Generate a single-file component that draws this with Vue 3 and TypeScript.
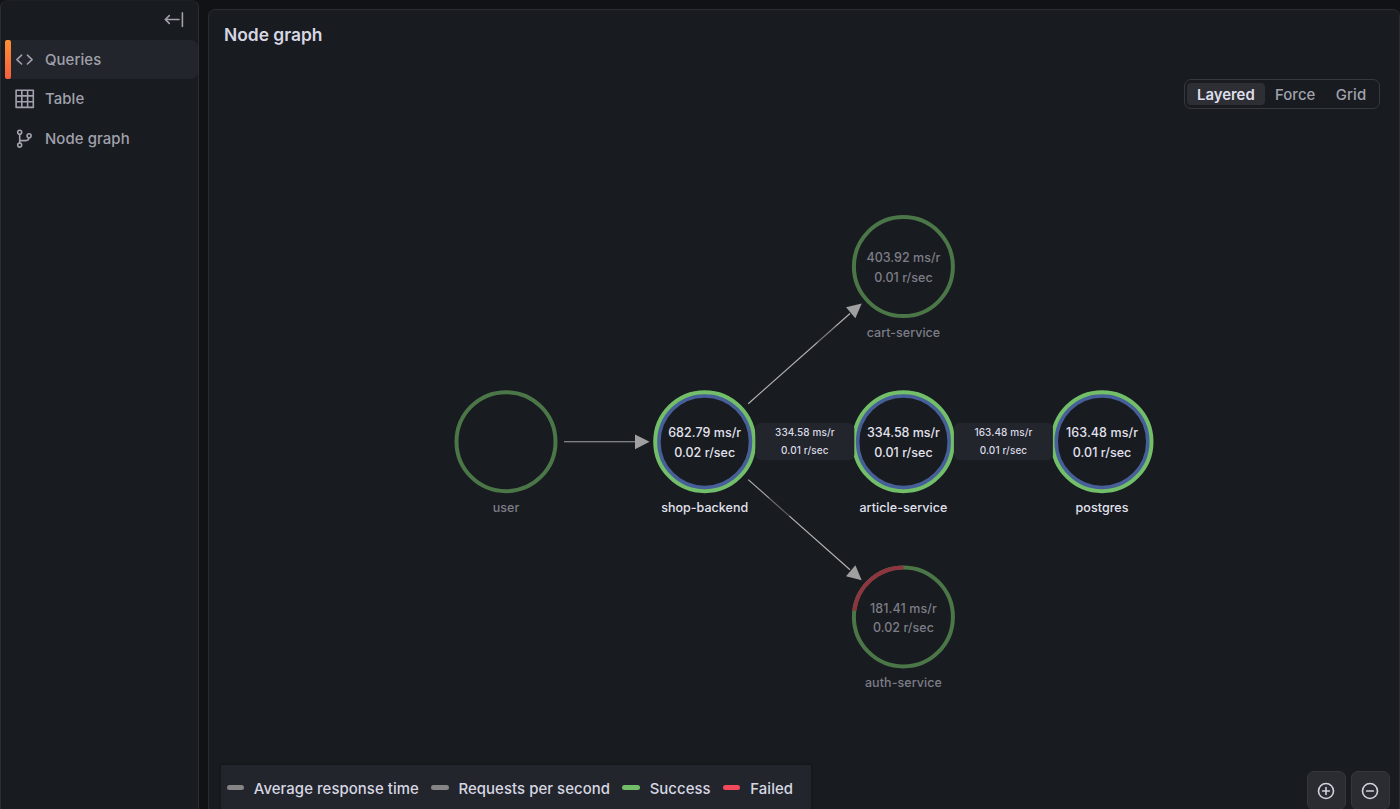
<script setup lang="ts">
interface GraphNode {
  id: string
  x: number
  y: number
  main: string
  mainWidth: number
  secondary: string
  secondaryWidth: number
  labelWidth: number
  active: boolean
  failed: number
}

const nodes: GraphNode[] = [
  { id: 'user', x: 506, y: 441.7, main: '', mainWidth: 0, secondary: '', secondaryWidth: 0, labelWidth: 26.5, active: false, failed: 0 },
  { id: 'shop-backend', x: 704.7, y: 441.7, main: '682.79 ms/r', mainWidth: 73, secondary: '0.02 r/sec', secondaryWidth: 61, labelWidth: 87, active: true, failed: 0 },
  { id: 'cart-service', x: 903.4, y: 266.6, main: '403.92 ms/r', mainWidth: 74, secondary: '0.01 r/sec', secondaryWidth: 58.5, labelWidth: 73.5, active: false, failed: 0 },
  { id: 'article-service', x: 903.4, y: 441.7, main: '334.58 ms/r', mainWidth: 73, secondary: '0.01 r/sec', secondaryWidth: 58.5, labelWidth: 88, active: true, failed: 0 },
  { id: 'auth-service', x: 903.4, y: 616.9, main: '181.41 ms/r', mainWidth: 67, secondary: '0.02 r/sec', secondaryWidth: 61, labelWidth: 77, active: false, failed: 23 },
  { id: 'postgres', x: 1102, y: 441.7, main: '163.48 ms/r', mainWidth: 72, secondary: '0.01 r/sec', secondaryWidth: 58.5, labelWidth: 53, active: true, failed: 0 },
]

const edgeLabels = [
  { x: 804.8, main: '334.58 ms/r', mainWidth: 59.5, secondary: '0.01 r/sec' },
  { x: 1003.4, main: '163.48 ms/r', mainWidth: 58, secondary: '0.01 r/sec' },
]

const layouts = ['Layered', 'Force', 'Grid']
const legend = [
  { name: 'Average response time', kind: 'grey' },
  { name: 'Requests per second', kind: 'grey' },
  { name: 'Success', kind: 'green' },
  { name: 'Failed', kind: 'red' },
]
</script>

<template>
  <div class="app">
    <aside class="sidebar">
      <div class="collapse">
        <svg width="20" height="16" viewBox="0 0 20 16"><path d="M15 7.5H1.5M5.3 3.6 1.3 7.5l4 3.9M18.4.9v13.6" /></svg>
      </div>
      <nav>
        <div class="item current">
          <svg width="20" height="20" viewBox="0 0 20 20"><path d="M6.6 5.2 1.9 9.6l4.7 4.4M12.4 5.2 17.1 9.6l-4.7 4.4" /></svg>
          <span>Queries</span>
        </div>
        <div class="item">
          <svg width="20" height="20" viewBox="0 0 20 20"><path d="M1.1 1.2h17.2v17.2H1.1zM6.8 1.2v17.2M12.6 1.2v17.2M1 6.9h17.3M1 12.7h17.3" /></svg>
          <span>Table</span>
        </div>
        <div class="item">
          <svg width="20" height="20" viewBox="0 0 20 20"><circle cx="4.7" cy="3.2" r="2" /><circle cx="4.7" cy="16.1" r="2" /><circle cx="14.1" cy="6.7" r="2" /><path d="M4.7 5.3v8.7M4.7 11.6h6.1c2 0 3.1-1.1 3.2-2.8" /></svg>
          <span>Node graph</span>
        </div>
      </nav>
    </aside>

    <main class="panel">
      <svg class="graph" width="1192" height="800" viewBox="208 9 1192 800">
        <defs>
          <linearGradient id="fadeDown" gradientUnits="userSpaceOnUse" x1="748" y1="480" x2="850" y2="569">
            <stop offset="0" stop-color="#b2b2b2" /><stop offset=".2" stop-color="#a6a6a6" />
            <stop offset=".21" stop-color="#777" /><stop offset=".4" stop-color="#5a5a5d" />
            <stop offset=".41" stop-color="#b2b2b2" /><stop offset="1" stop-color="#b2b2b2" />
          </linearGradient>
          <linearGradient id="fadeUp" gradientUnits="userSpaceOnUse" x1="748" y1="404" x2="850" y2="314">
            <stop offset="0" stop-color="#b2b2b2" /><stop offset=".67" stop-color="#b2b2b2" />
            <stop offset=".7" stop-color="#777" /><stop offset=".84" stop-color="#888" />
            <stop offset=".88" stop-color="#b2b2b2" />
          </linearGradient>
        </defs>

        <g class="edges">
          <path d="M564 441.7H636" stroke="#a2a2a4" />
          <path d="M748.2 403.8 850 313.5" stroke="url(#fadeUp)" />
          <path d="M748.2 479.6 850 569.8" stroke="url(#fadeDown)" />
        </g>
        <g class="heads">
          <path d="M635 434.4v14.8l14.6-7.4z" />
          <path d="M861.7 303.6 846 307.3l9.4 11z" />
          <path d="M861.7 580.2 846 576.2l9.4-11z" />
        </g>

        <g v-for="n in nodes" :key="n.id" :class="['node', { active: n.active }]">
          <circle v-if="n.active" class="inner" :cx="n.x" :cy="n.y" r="46" />
          <circle class="ring" :cx="n.x" :cy="n.y" r="49.5" />
          <circle
            v-if="n.failed" class="failed" :cx="n.x" :cy="n.y" r="49.5" pathLength="100"
            :stroke-dasharray="`${n.failed} 100`" :transform="`rotate(${-90 - n.failed * 3.6} ${n.x} ${n.y})`"
          />
          <text v-if="n.main" :x="n.x" :y="n.y - 4.4" :textLength="n.mainWidth">{{ n.main }}</text>
          <text v-if="n.main" :x="n.x" :y="n.y + 15" :textLength="n.secondaryWidth">{{ n.secondary }}</text>
          <text :x="n.x" :y="n.y + 69.9" :textLength="n.labelWidth">{{ n.id }}</text>
        </g>

        <g v-for="e in edgeLabels" :key="e.x" class="edge-label">
          <rect :x="e.x - 49.5" y="423" width="99" height="37.2" rx="5.5" />
          <text :x="e.x" y="435.6" :textLength="e.mainWidth">{{ e.main }}</text>
          <text :x="e.x" y="454.3" textLength="47.5">{{ e.secondary }}</text>
        </g>
      </svg>

      <header>Node graph</header>
      <div class="modes">
        <span v-for="(l, i) in layouts" :key="l" :class="{ on: i === 0 }">{{ l }}</span>
      </div>

      <footer>
        <div class="legend">
          <div v-for="item in legend" :key="item.name" class="entry">
            <i :class="item.kind"></i><span>{{ item.name }}</span>
          </div>
        </div>
        <div class="zoom">
          <button aria-label="Zoom in"><svg width="18" height="18" viewBox="0 0 18 18"><circle cx="9" cy="9" r="7.5" /><path d="M5.6 9h6.8M9 5.6v6.8" /></svg></button>
          <button aria-label="Zoom out"><svg width="18" height="18" viewBox="0 0 18 18"><circle cx="9" cy="9" r="7.5" /><path d="M5.6 9h6.8" /></svg></button>
        </div>
      </footer>
    </main>
  </div>
</template>

<style>
body { margin: 0; background: #111216; }
</style>

<style scoped>
* { box-sizing: border-box; }
.app {
  display: flex;
  gap: 9px;
  width: 1400px;
  height: 809px;
  overflow: hidden;
  background: #111216;
  color: #d7d7e3;
  font-family: Inter, "Liberation Sans", sans-serif;
  font-size: 14.9px;
  font-weight: 450;
  letter-spacing: .1px;
}
.sidebar {
  width: 199px;
  height: 820px;
  flex: none;
  background: #181b1f;
  border: 1px solid #2b2d33;
  border-top-color: #1c1f24;
  border-radius: 7px;
}
.collapse { height: 39px; padding: 10.5px 14px 0 0; display: flex; justify-content: flex-end; align-items: flex-start; }
.sidebar svg { fill: none; stroke: #a1a1ad; stroke-width: 1.6; stroke-linecap: round; stroke-linejoin: round; flex: none; }
.item {
  position: relative;
  display: flex;
  align-items: center;
  gap: 10px;
  height: 39px;
  margin: 0 0 .6px 5px;
  padding-left: 9px;
  color: #a1a1ad;
  white-space: nowrap;
}
.current { background: #22252b; border-radius: 3px 7px 7px 3px; }
.current::before {
  content: "";
  position: absolute;
  left: -1px;
  top: 0;
  width: 6px;
  height: 39px;
  border-radius: 2px;
  background: linear-gradient(#ff8f35, #f55f3e);
}
.panel {
  position: relative;
  width: 1192px;
  height: 811px;
  margin-top: 9px;
  flex: none;
  background: #181b1f;
  border: 1px solid #2a2c31;
  border-radius: 7px;
}
.graph { position: absolute; left: -1px; top: -1px; letter-spacing: 0; }
header { position: relative; padding: 14px 0 0 15px; height: 69px; font-size: 17.4px; line-height: 22px; font-weight: 600; letter-spacing: 0; }
.modes {
  position: relative;
  display: flex;
  width: 196px;
  height: 30px;
  margin-left: 975px;
  padding: 3px 2px;
  border: 1px solid #36383e;
  border-radius: 7px;
  line-height: 24px;
  color: #a1a1ad;
}
.modes span { height: 22px; padding: 0 10.2px; border-radius: 4px; }
.modes .on { padding: 0 10px; background: #2e2f35; color: #dedeea; font-weight: 600; letter-spacing: 0; }
.edges path { fill: none; stroke-width: 1.15; }
.heads path { fill: #a0a0a0; }
.node circle { fill: none; stroke-width: 4; }
.node .ring { stroke: #4b7647; }
.node .failed { stroke: #8f3540; }
.active .ring { stroke: #73bf69; }
.node .inner { stroke: #465f98; stroke-width: 4; }
text { text-anchor: middle; font-size: 12.5px; font-weight: 500; fill: #7d7d88; }
.active text { fill: #e2e2ef; }
.edge-label rect { fill: #22252b; }
.edge-label text { font-size: 10px; fill: #dadae6; }
footer { position: relative; display: flex; justify-content: space-between; margin-top: 656px; }
.legend {
  display: flex;
  gap: 12.3px;
  width: 590px;
  height: 50px;
  margin-left: 12px;
  padding: 12px 0 0 5.5px;
  background: #22252b;
  box-shadow: 0 0 2px #101216;
  line-height: 24px;
  letter-spacing: .07px;
}
.entry { display: flex; gap: 9.8px; white-space: nowrap; }
.entry i { width: 17.5px; height: 5.6px; margin-top: 7.8px; border-radius: 3px; flex: none; }
.grey { background: #858585; }
.green { background: #73bf69; }
.red { background: #f2495c; }
.zoom { display: flex; gap: 5px; margin: 6px 9px 0 0; }
button {
  width: 39px;
  height: 39px;
  padding: 0 1px 0 0;
  border: 1px solid #36373d;
  border-radius: 7px;
  background: #2b2c32;
  display: flex;
  align-items: center;
  justify-content: center;
}
button svg { fill: none; stroke: #d2d2df; stroke-width: 1.6; stroke-linecap: round; }
</style>
